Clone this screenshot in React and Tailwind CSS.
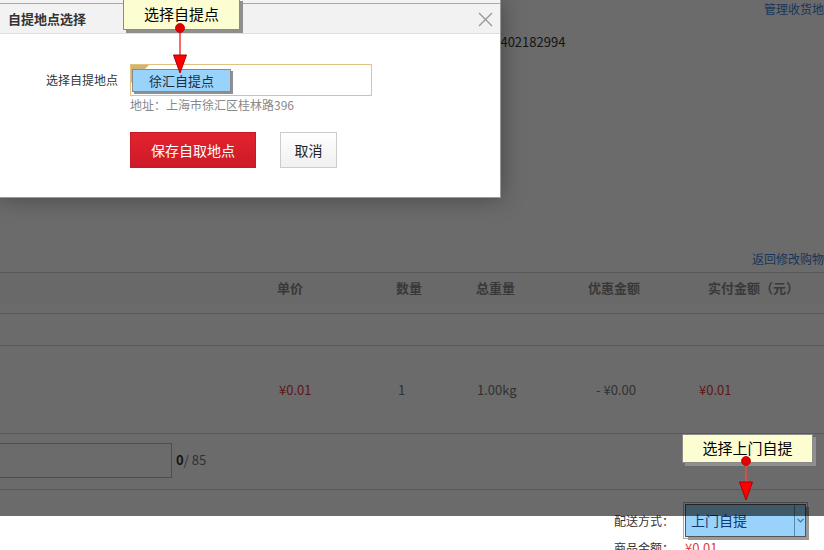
import React from 'react'

const FONT = { fontFamily: '"Noto Sans CJK SC", "Noto Sans", sans-serif' }

function Callout({ text, className }) {
  // yellow note with a red pin and arrow pointing down
  return (
    <div className={`absolute ${className}`}>
      <div className="relative border border-[#8a8a8a] bg-[#fdfdd2] shadow-[3px_3px_0_#8f8f8f] h-full flex items-center justify-center text-[15px] text-black whitespace-nowrap">
        {text}
      </div>
    </div>
  )
}

function Pin({ x, y, len }) {
  return (
    <svg className="absolute" style={{ left: x - 8, top: y - 5 }} width="16" height={len + 24} viewBox={`0 0 16 ${len + 24}`}>
      <line x1="8" y1="5" x2="8" y2={len + 6} stroke="#f04848" strokeWidth="1.6" />
      <polygon points={`1.5,${len + 4} 14.5,${len + 4} 8,${len + 22}`} fill="#ff0000" stroke="#b00000" strokeWidth="1" />
      <circle cx="8" cy="5" r="4.5" fill="#e40000" stroke="#b00000" strokeWidth="0.8" />
    </svg>
  )
}

export default function App() {
  return (
    <div className="relative w-[824px] h-[550px] overflow-hidden bg-white text-[12px] text-[#333]" style={FONT}>
      {/* page behind the mask */}
      <div className="flex flex-col">
        <div className="h-[34px] pl-[764px] pt-[1px] leading-[16px] text-[#3c7fd6] whitespace-nowrap">管理收货地址</div>
        <div className="h-[16px] pl-[486px] leading-[16px] text-[13px] whitespace-nowrap">13402182994</div>
        <div className="h-[201px]" />
        <div className="h-[21px] pl-[752px] leading-[16px] text-[#3c7fd6] whitespace-nowrap">返回修改购物车</div>

        <div className="h-[31px] border-t border-[#d5d5d5] bg-[#fafafa] flex items-center text-[13px] font-bold text-[#888] whitespace-nowrap">
          <div className="w-[277px] shrink-0" />
          <div className="w-[119px] shrink-0">单价</div>
          <div className="w-[80px] shrink-0">数量</div>
          <div className="w-[112px] shrink-0">总重量</div>
          <div className="w-[120px] shrink-0">优惠金额</div>
          <div>实付金额（元）</div>
        </div>
        <div className="h-[10px]" />
        <div className="h-[32px] border-t border-[#d5d5d5]" />
        <div className="h-[89px] border-t border-b border-[#d5d5d5] flex items-center text-[13px] text-[#777] whitespace-nowrap">
          <div className="w-[279px] shrink-0" />
          <div className="w-[119px] shrink-0 text-[#e4393c]">¥0.01</div>
          <div className="w-[79px] shrink-0">1</div>
          <div className="w-[119px] shrink-0">1.00kg</div>
          <div className="w-[103px] shrink-0">- ¥0.00</div>
          <div className="text-[#e4393c]">¥0.01</div>
        </div>

        <div className="h-[56px] border-b border-[#d5d5d5] flex items-start pt-[9px]">
          <div className="w-[173px] h-[35px] -ml-[1px] border border-[#bbb] bg-white" />
          <div className="ml-[4px] mt-[9px] leading-[16px] text-[13px] text-[#777] whitespace-nowrap">
            <span className="font-bold text-[#333]">0</span>/ 85
          </div>
        </div>

        <div className="pt-[12px] flex items-center whitespace-nowrap">
          <div className="w-[614px] shrink-0" />
          <div className="w-[69px] shrink-0 text-[#333]">配送方式：</div>
          <div className="relative w-[125px] h-[37px] border border-[#aaa] bg-white p-[1px]">
            <div className="h-full border border-[#555] bg-[#99d3fb] shadow-[3px_3px_0_#9a9a9a] flex items-center">
              <span className="pl-[5px] flex-1 text-[14px] text-[#123a70]">上门自提</span>
              <div className="w-[11px] h-full border-l border-[#5b87a8] flex items-center justify-center">
                <svg width="7" height="5" viewBox="0 0 7 5"><path d="M0.5 0.8 L3.5 3.8 L6.5 0.8" fill="none" stroke="#4a6f8a" strokeWidth="1.2" /></svg>
              </div>
            </div>
          </div>
        </div>
        <div className="pt-[1px] flex items-center whitespace-nowrap leading-[16px]">
          <div className="w-[614px] shrink-0" />
          <div className="w-[71px] shrink-0">商品金额：</div>
          <div className="text-[#e4393c] text-[13px]">¥0.01</div>
        </div>
      </div>

      {/* mask */}
      <div className="absolute left-0 top-0 w-full h-[516px] bg-[rgba(0,0,0,0.58)]" />

      {/* dialog */}
      <div className="absolute left-0 top-0 w-[501px] h-[198px] bg-white border-r border-b border-[#999] shadow-[0_0_22px_rgba(0,0,0,0.35)] flex flex-col">
        <div className="h-[3px] bg-[#f3f3f3]" />
        <div className="h-[31px] border-t border-b border-t-[#a8a8a8] border-b-[#dedede] bg-[#f2f2f2] flex items-center justify-between pl-[8px] pr-[7px]">
          <span className="text-[13px] font-bold text-[#333] whitespace-nowrap">自提地点选择</span>
          <svg width="15" height="15" viewBox="0 0 15 15" className="mt-[2px]">
            <path d="M1 1 L14 14 M14 1 L1 14" stroke="#999" strokeWidth="1.4" />
          </svg>
        </div>
        <div className="flex pt-[30px]">
          <div className="w-[118px] shrink-0 text-right pt-[8px] leading-[16px] whitespace-nowrap">选择自提地点</div>
          <div className="ml-[12px] flex flex-col">
            <div className="relative w-[242px] h-[32px] border border-[#e0c383] bg-white pl-[1px] pt-[4px]">
              <svg className="absolute left-0 top-0" width="18" height="18" viewBox="0 0 18 18">
                <polygon points="0,0 18,0 0,18" fill="#d7b46e" />
                <path d="M2.5 6.5 L5 9 L10 3.5" fill="none" stroke="#9fb8c8" strokeWidth="1.6" />
              </svg>
              <div className="relative w-[99px] h-[23px] border border-[#8a8a8a] bg-[#99d3fb] shadow-[2px_2px_0_#8f8f8f] flex items-center justify-center text-[13px] text-[#1a2f48] whitespace-nowrap">
                徐汇自提点
              </div>
            </div>
            <div className="mt-[1px] leading-[16px] text-[#888] whitespace-nowrap">地址：上海市徐汇区桂林路396</div>
            <div className="mt-[19px] flex gap-[24px]">
              <div className="w-[126px] h-[36px] bg-gradient-to-b from-[#e2232f] to-[#ce1a27] border border-[#c81a26] flex items-center justify-center text-[14px] text-white whitespace-nowrap">保存自取地点</div>
              <div className="w-[57px] h-[36px] bg-gradient-to-b from-white to-[#f0f0f0] border border-[#ccc] flex items-center justify-center text-[14px] text-[#222] whitespace-nowrap">取消</div>
            </div>
          </div>
        </div>
      </div>

      {/* annotations */}
      <Callout text="选择自提点" className="left-[123px] -top-[2px] w-[117px] h-[32px]" />
      <Pin x={180} y={28} len={28} />
      <Callout text="选择上门自提" className="left-[682px] top-[434px] w-[131px] h-[29px]" />
      <Pin x={746} y={461} len={22} />
    </div>
  )
}
